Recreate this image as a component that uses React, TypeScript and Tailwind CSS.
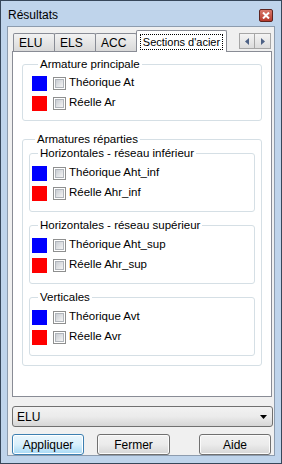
import React from "react";

type Row = { color: "blue" | "red"; label: string };

function Swatch({ color }: { color: "blue" | "red" }) {
  return (
    <span
      className={
        color === "blue"
          ? "block w-[15px] h-[15px] bg-[#0000ff] shrink-0"
          : "block w-[15px] h-[15px] bg-[#ff0000] shrink-0"
      }
    />
  );
}

function CheckBox() {
  return (
    <span className="block ml-[6px] w-[13px] h-[13px] border border-[#8e8f8f] bg-white p-[1px] shrink-0">
      <span className="block w-full h-full bg-gradient-to-br from-[#c9cdd3] to-[#f4f4f4] border border-[#b0b5bb]" />
    </span>
  );
}

function Line({ row }: { row: Row }) {
  return (
    <div className="h-[20px] flex items-center">
      <Swatch color={row.color} />
      <CheckBox />
      <span className="ml-[3px] leading-none whitespace-nowrap text-[11.5px]">{row.label}</span>
    </div>
  );
}

function Group({
  title,
  className,
  children,
}: {
  title: string;
  className?: string;
  children: React.ReactNode;
}) {
  return (
    <fieldset className={"border border-[#d5dfe5] rounded-[3px] " + (className ?? "")}>
      <legend className="ml-[6px] px-[2px] leading-[13px] whitespace-nowrap text-[11.5px]">{title}</legend>
      {children}
    </fieldset>
  );
}

function Tab({ label, active }: { label: string; active?: boolean }) {
  if (active) {
    return (
      <div className="h-[22px] -mb-px w-[91px] bg-white border border-[#898c95] border-b-0 rounded-t-[2px] flex items-center justify-center z-10 -ml-px">
        <span className="border border-dotted border-black px-[2px] leading-[14px] whitespace-nowrap">
          Sections d'acier
        </span>
      </div>
    );
  }
  return (
    <div className="h-[18px] w-[42px] border border-[#898c95] border-b-0 rounded-t-[2px] bg-gradient-to-b from-[#f2f2f2] to-[#d9d9d9] flex items-center pl-[5px] text-[12px] -ml-px first:ml-0">
      {label}
    </div>
  );
}

export default function App() {
  return (
    <div className="w-[282px] h-[464px] bg-[#bfd4eb] border border-[#37475a] flex flex-col font-['Liberation_Sans',Arial,sans-serif] text-[11px] text-black select-none">
      {/* title bar */}
      <div className="h-[25px] flex items-center justify-between pl-[7px] pr-[8px] shrink-0">
        <span className="text-[12px] mt-[3px]">Résultats</span>
        <span className="w-[14px] h-[13px] mt-[4px] rounded-[2px] border border-[#5e2520] bg-gradient-to-b from-[#d9786b] to-[#b5382b] flex items-center justify-center">
          <svg width="8" height="7" viewBox="0 0 8 7">
            <path d="M1 0.5 L7 6.5 M7 0.5 L1 6.5" stroke="#fff" strokeWidth="2" />
          </svg>
        </span>
      </div>

      {/* client area */}
      <div className="flex-1 mx-[6px] mb-[7px] bg-[#f0f0f0] border border-[#8d9cae] pl-[4px] pr-[2px] pt-[2px] flex flex-col">
        {/* tab strip */}
        <div className="h-[22px] flex items-end pl-[1px]">
          <Tab label="ELU" />
          <Tab label="ELS" />
          <Tab label="ACC" />
          <Tab label="Sections d'acier" active />
          <div className="ml-auto mr-[1px] mb-[2px] flex">
            <span className="w-[16px] h-[16px] border border-[#a6a6a6] bg-gradient-to-b from-[#f4f4f4] to-[#dcdcdc] flex items-center justify-center">
              <svg width="4" height="7" viewBox="0 0 4 7">
                <path d="M4 0 L0 3.5 L4 7 Z" fill="#4d6185" />
              </svg>
            </span>
            <span className="w-[16px] h-[16px] border border-[#a6a6a6] border-l-0 bg-gradient-to-b from-[#f4f4f4] to-[#dcdcdc] flex items-center justify-center">
              <svg width="4" height="7" viewBox="0 0 4 7">
                <path d="M0 0 L4 3.5 L0 7 Z" fill="#4d6185" />
              </svg>
            </span>
          </div>
        </div>

        {/* tab panel */}
        <div className="h-[346px] bg-white border border-[#898c95] px-[9px] pt-[6px]">
          <Group title="Armature principale" className="w-[240px] pl-[9px] pb-[7px]">
            <div className="pt-[2px]">
              <Line row={{ color: "blue", label: "Théorique At" }} />
              <Line row={{ color: "red", label: "Réelle Ar" }} />
            </div>
          </Group>

          <Group title="Armatures réparties" className="w-[240px] mt-[12px] px-[6px] pb-[9px]">
            <div className="pt-[1px] flex flex-col gap-[7px]">
              <Group title="Horizontales - réseau inférieur" className="pl-[2px] pb-[8px]">
                <div className="pt-[3px]">
                  <Line row={{ color: "blue", label: "Théorique Aht_inf" }} />
                  <Line row={{ color: "red", label: "Réelle Ahr_inf" }} />
                </div>
              </Group>
              <Group title="Horizontales - réseau supérieur" className="pl-[2px] pb-[8px]">
                <div className="pt-[3px]">
                  <Line row={{ color: "blue", label: "Théorique Aht_sup" }} />
                  <Line row={{ color: "red", label: "Réelle Ahr_sup" }} />
                </div>
              </Group>
              <Group title="Verticales" className="pl-[2px] pb-[8px]">
                <div className="pt-[3px]">
                  <Line row={{ color: "blue", label: "Théorique Avt" }} />
                  <Line row={{ color: "red", label: "Réelle Avr" }} />
                </div>
              </Group>
            </div>
          </Group>
        </div>

        {/* combo */}
        <div className="mt-[9px] h-[21px] mr-[-1px] border border-[#707070] rounded-[3px] bg-gradient-to-b from-[#f2f2f2] via-[#ebebeb] to-[#d6d6d6] flex items-center pl-[4px] pr-[5px]">
          <span className="text-[12px]">ELU</span>
          <svg className="ml-auto" width="7" height="4" viewBox="0 0 7 4">
            <path d="M0 0 L7 0 L3.5 4 Z" fill="#000" />
          </svg>
        </div>

        {/* buttons */}
        <div className="mt-[7px] flex text-[12px]">
          <button className="w-[72px] h-[21px] rounded-[3px] border border-[#3c7fb1] bg-gradient-to-b from-[#eaf6fd] via-[#d9f0fc] to-[#a7d9f5] shadow-[inset_0_0_0_1px_#ffffff]">
            Appliquer
          </button>
          <button className="ml-[13px] w-[73px] h-[21px] rounded-[3px] border border-[#707070] bg-gradient-to-b from-[#f2f2f2] via-[#ebebeb] to-[#d6d6d6] shadow-[inset_0_0_0_1px_#fbfbfb]">
            Fermer
          </button>
          <button className="ml-auto mr-[1px] w-[72px] h-[21px] rounded-[3px] border border-[#707070] bg-gradient-to-b from-[#f2f2f2] via-[#ebebeb] to-[#d6d6d6] shadow-[inset_0_0_0_1px_#fbfbfb]">
            Aide
          </button>
        </div>
      </div>
    </div>
  );
}
